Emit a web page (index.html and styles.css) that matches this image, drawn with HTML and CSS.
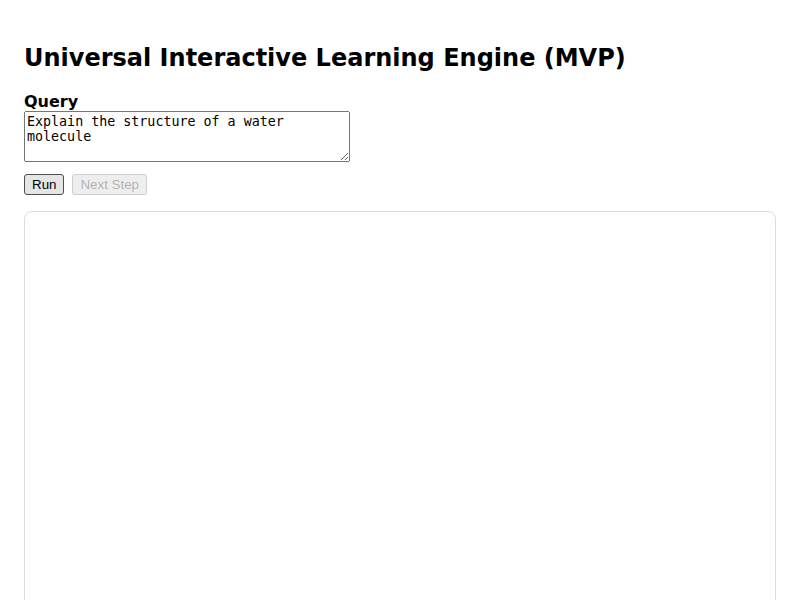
FILE: index.html
```html
<!DOCTYPE html>
<html lang="en">
<head>
  <meta charset="utf-8">
  <title>Universal Interactive Learning Engine (MVP)</title>
  <link rel="stylesheet" href="styles.css">
</head>
<body>
  <h1>Universal Interactive Learning Engine (MVP)</h1>
  <div class="query">
    <label for="query">Query</label>
    <textarea id="query" rows="3">Explain the structure of a water molecule</textarea>
  </div>
  <div class="actions">
    <button class="run" type="button">Run</button>
    <button type="button" disabled>Next Step</button>
  </div>
  <main class="stage"></main>
</body>
</html>
```

FILE: styles.css
```css
body {
  margin: 0;
  padding: 24px;
  font-family: "DejaVu Sans", sans-serif;
}

h1 {
  margin: 16px 0;
  font-size: 24px;
  line-height: 36px;
}

.query {
  display: flex;
  flex-direction: column;
  align-items: flex-start;
  margin-bottom: 12px;
}

.query label {
  font-weight: bold;
  line-height: 19px;
}

.query textarea {
  width: 320px;
  font-family: "DejaVu Sans Mono", monospace;
}

.actions {
  display: flex;
  gap: 8px;
  margin-bottom: 16px;
}

.run {
  padding: 2px 7px;
  border: 1px solid #4f4f4f;
  border-radius: 3px;
  background: #e5e5e5;
}

.stage {
  min-height: 480px;
  border: 1px solid #ddd;
  border-radius: 8px;
}
```
